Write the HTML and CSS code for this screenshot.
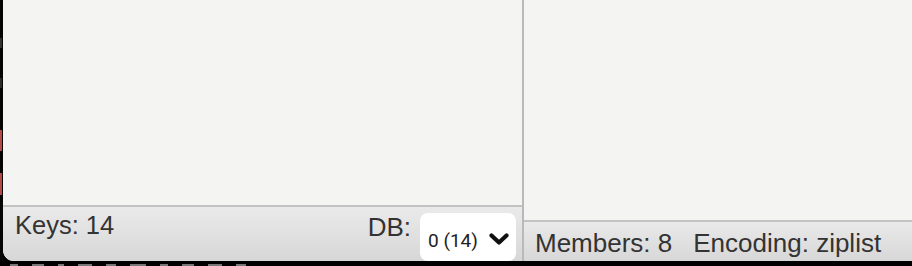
FILE: index.html
```html
<!DOCTYPE html>
<html>
<head>
<meta charset="utf-8">
<link rel="stylesheet" href="styles.css">
</head>
<body>
<div class="screen">
  <div class="top">
    <div class="edge">
      <div class="seg seg-grey1"></div>
      <div class="seg seg-grey2"></div>
      <div class="seg seg-red1"></div>
      <div class="seg seg-red2"></div>
    </div>
    <div class="window">
      <div class="pane pane-left">
        <div class="content"></div>
        <div class="status status-left">
          <span class="label keys">Keys: 14</span>
          <span class="label db">DB:</span>
          <div class="select">
            <span class="sel-text">0 (14)</span>
            <svg class="chev" width="20" height="14" viewBox="0 0 20 14"><polyline points="2.5,3.5 10,10.5 17.5,3.5" fill="none" stroke="#111" stroke-width="4.2" stroke-linecap="round" stroke-linejoin="round"/></svg>
          </div>
        </div>
      </div>
      <div class="divider"></div>
      <div class="pane pane-right">
        <div class="content"></div>
        <div class="status status-right">
          <span class="label">Members: 8</span>
          <span class="label enc">Encoding: ziplist</span>
        </div>
      </div>
    </div>
  </div>
  <div class="bottom">
    <i class="frag f1"></i><i class="frag f2"></i><i class="frag f3"></i><i class="frag f4"></i><i class="frag f5"></i><i class="frag f6"></i><i class="frag f7"></i><i class="frag f8"></i><i class="frag f9"></i><i class="frag f10"></i>
  </div>
</div>
</body>
</html>
```
FILE: styles.css
```css
html, body {
  margin: 0;
  padding: 0;
  background: #000;
  overflow: hidden;
}
.screen {
  width: 912px;
  height: 266px;
  display: flex;
  flex-direction: column;
  font-family: "Liberation Sans", Arial, sans-serif;
}
.top {
  display: flex;
  height: 261px;
}
.edge {
  width: 3px;
  background: #050505;
  display: flex;
  flex-direction: column;
}
.seg { width: 2px; }
.seg-grey1 { height: 10px; margin-top: 38px; background: #333; }
.seg-grey2 { height: 10px; margin-top: 30px; background: #2a2a2a; }
.seg-red1 { height: 21px; margin-top: 42px; background: #b44a45; }
.seg-red2 { height: 22px; margin-top: 22px; background: #b44a45; }
.window {
  flex: 1;
  display: flex;
  border-bottom-left-radius: 11px;
  overflow: hidden;
  background: #f4f4f3;
}
.pane {
  display: flex;
  flex-direction: column;
}
.pane-left { width: 519px; }
.pane-right { flex: 1; }
.divider {
  width: 2px;
  background: #b9b9b9;
}
.content {
  flex: 1;
  background: #f4f4f3;
}
.status {
  display: flex;
  align-items: flex-start;
  background: linear-gradient(#eaeaea, #d7d7d7);
  color: #333;
  font-size: 26px;
}
.status-left {
  height: 54px;
  border-top: 2px solid #c3c3c3;
}
.status-right {
  height: 39px;
  border-top: 2px solid #c3c3c3;
  padding-left: 11px;
}
.keys {
  margin-left: 12px;
  margin-top: 4px;
  flex: 1;
  font-size: 25.5px;
}
.db {
  margin-top: 5px;
  margin-right: 9px;
}
.status-right .label {
  margin-top: 6px;
}
.enc { margin-left: 21px; }
.select {
  margin-top: 6px;
  width: 96px;
  height: 48px;
  background: #fff;
  border-radius: 8px;
  margin-right: 6px;
  display: flex;
  align-items: center;
  box-sizing: border-box;
  padding-left: 8px;
  padding-top: 7px;
}
.sel-text {
  font-family: Roboto, "Liberation Sans", sans-serif;
  font-size: 19px;
  color: #222;
  flex: 1;
}
.chev {
  margin-right: 7px;
  margin-top: -4px;
}
.bottom {
  flex: 1;
  overflow: hidden;
  background: #000;
  display: flex;
  align-items: flex-end;
  gap: 14px;
  padding-left: 10px;
}
.frag {
  display: block;
  height: 2px;
  background: #777;
}
.f1 { width: 8px; }
.f2 { width: 12px; }
.f3 { width: 6px; }
.f4 { width: 14px; }
.f5 { width: 10px; }
.f6 { width: 16px; }
.f7 { width: 8px; }
.f8 { width: 12px; }
.f9 { width: 14px; }
.f10 { width: 10px; }
```
